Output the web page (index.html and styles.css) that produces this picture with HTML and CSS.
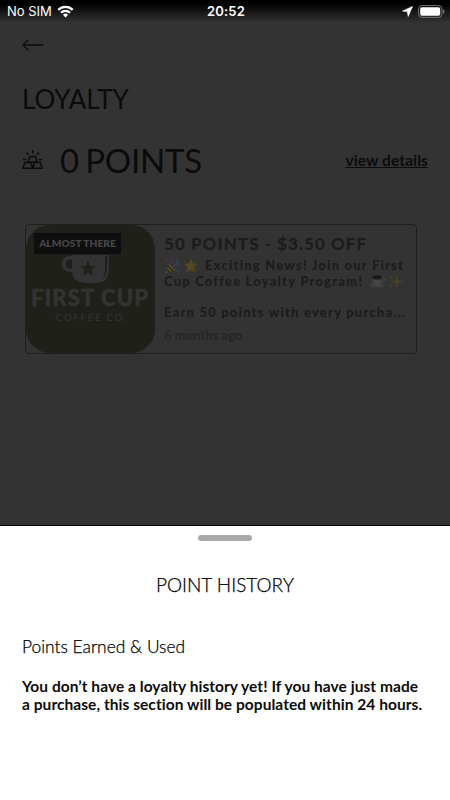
FILE: index.html
```html
<!DOCTYPE html>
<html lang="en">
<head>
    <meta charset="UTF-8">
    <meta name="viewport" content="width=device-width, initial-scale=1.0">
    <title>Loyalty</title>
    <link rel="stylesheet" href="styles.css">
</head>
<body>

    <div class="screen">
        <div class="status-bar">
            <div class="carrier">
                <span>No SIM</span>
                <svg width="17" height="13" viewBox="0 0 17 13">
                    <path d="M8.5 12.5 5.9 9.7a3.7 3.7 0 0 1 5.2 0z" fill="#fff"/>
                    <path d="M4 7.8a6.3 6.3 0 0 1 9 0M1.3 4.9a10 10 0 0 1 14.4 0" fill="none" stroke="#fff" stroke-width="2.3"/>
                </svg>
            </div>
            <div class="time">20:52</div>
            <div class="indicators">
                <svg width="11" height="11" viewBox="0 0 11 11">
                    <path d="M10.5.5 6.2 10.5 5.3 5.8.5 5z" fill="#fff" stroke="#fff" stroke-width=".6"/>
                </svg>
                <svg width="27" height="13" viewBox="0 0 27 13">
                    <rect x=".6" y=".6" width="23.3" height="11.8" rx="3.3" fill="none" stroke="#777" stroke-width="1"/>
                    <rect x="2.2" y="2.2" width="20" height="8.6" rx="1.8" fill="#fff"/>
                    <path d="M25 4.2q1.6.6 1.6 2.3T25 8.8z" fill="#777"/>
                </svg>
            </div>
        </div>

        <div class="page">
            <svg class="back" width="22" height="12" viewBox="0 0 22 12">
                <path d="M6.2.7 1 6l5.2 5.3M1 6h20.5" fill="none" stroke="#0b0b0b" stroke-width="1.3"/>
            </svg>
            <h1>LOYALTY</h1>

            <div class="points">
                <svg width="22" height="20" viewBox="0 0 22 20" fill="none" stroke="#0b0b0b" stroke-width="1.5">
                    <path d="M8 6.5h5.4l1.6 5.5H6.2zM2.8 12.5h6l2 5.8H.9zM12.4 12.5h6l1.8 5.8h-9.4zM10.7 0v3.3M4.5 2.6l1.9 2.1M16.900 2.6 15 4.7M1 9.5h3.2M17 9.5h3.2"/>
                </svg>
                <span class="total">0 POINTS</span>
                <a class="details">view details</a>
            </div>

            <div class="card">
                <div class="picture">
                    <span class="badge">ALMOST THERE</span>
                    <svg width="130" height="129" viewBox="0 0 130 129">
                        <path d="M46 30h37v14q0 14-14 14h-8q-14 0-15-11h-1c-12 0-12-16-1-16h2zM46 34.5h-2c-6 0-6 9 0 9h2z" fill="#333" fill-rule="evenodd"/>
                        <path d="M79 31v13q0 8-4 11 5-3 5.6-10l.9-14z" fill="#1f201a"/>
                        <path d="m62 35.5 2.2 5.4 5.8.4-4.5 3.7 1.5 5.6-5-3.1-5 3.1 1.5-5.6-4.5-3.7 5.8-.4z" fill="#1f201a"/>
                        <text class="logo-name" x="5" y="80.5" textLength="117">FIRST CUP</text>
                        <text class="logo-sub" x="29.5" y="95.5" textLength="71">COFFEE CO.</text>
                    </svg>
                </div>
                <div class="offer">
                    <h2>50 POINTS - $3.50 OFF</h2>
                    <p class="text line-emoji">
                        <svg class="emoji" width="17" height="16" viewBox="0 0 17 16">
                            <path d="M1 15.5 5 5.5l6.5 6.5z" fill="#54492a"/>
                            <path d="m2.5 11.5 3 2.5M4 8l5 5" stroke="#2b2422" stroke-width="1.3"/>
                            <path d="M7 6q3-2 1-5M10 9q2-4 6-3" fill="none" stroke="#4a3358" stroke-width="1.7"/>
                            <path d="m11 6 3-4M11 12h4" stroke="#264656" stroke-width="1.5"/>
                            <path d="M2 2h2M5 3h1M12 2h1M15 9h1M13 14h2" stroke="#5e3232" stroke-width="1.6"/>
                        </svg>
                        <svg class="emoji" width="17" height="16" viewBox="0 0 17 16">
                            <path d="m8 2 1.8 3.7 4 .6-2.9 3 .7 4.2L8 11.6l-3.7 1.9.7-4.2-2.9-3 4.1-.6z" fill="#524821" stroke="#524821" stroke-linejoin="round"/>
                            <path d="M8 0v2M1 3l2 1.5M15 3l-2 1.5M1 12l2-1M15 12l-2-1M8 13v3" stroke="#484023"/>
                        </svg>
                        <span>Exciting News! Join our First</span>
                    </p>
                    <p class="text line-emoji">
                        <span>Cup Coffee Loyalty Program!</span>
                        <svg class="emoji cup" width="17" height="14" viewBox="0 0 17 14">
                            <ellipse cx="8" cy="11.4" rx="7.8" ry="2.2" fill="#3d3e3e"/>
                            <path d="M3 3h10q0 9-5 9T3 3z" fill="#434443"/>
                            <ellipse cx="8" cy="3.4" rx="5" ry="2.2" fill="#1d1814"/>
                            <path d="M13 4q4-1 2 2.5L12 9" fill="none" stroke="#434443" stroke-width="1.2"/>
                        </svg>
                        <svg class="emoji" width="16" height="15" viewBox="0 0 16 15">
                            <path d="m9 1 1.6 5L15 7.5 10.6 9 9 14 7.4 9 3 7.5 7.4 6zM3 1l.7 2 2 .7-2 .7L3 6.5l-.7-2.1-2-.7 2-.7zM3 10l.7 1.5 1.5.5-1.5.5L3 14l-.7-1.5L.8 12l1.5-.5z" fill="#494123"/>
                        </svg>
                    </p>
                    <p class="text last">Earn 50 points with every purcha...</p>
                    <p class="age">6 months ago</p>
                </div>
            </div>
        </div>

        <div class="sheet">
            <div class="handle"></div>
            <h3>POINT HISTORY</h3>
            <h4>Points Earned &amp; Used</h4>
            <p>You don’t have a loyalty history yet! If you have just made<br>a purchase, this section will be populated within 24 hours.</p>
        </div>
    </div>

</body>
</html>
```
FILE: styles.css
```css
* {
    box-sizing: border-box;
}
body {
    margin: 0;
    font-family: Lato, sans-serif;
    font-variant-ligatures: none;
    color: #0b0b0b;
}
h1, h2, h3, h4, p {
    margin: 0;
    font-weight: 400;
    white-space: nowrap;
}
svg {
    display: block;
    flex: none;
}
.screen {
    display: flex;
    flex-direction: column;
    width: 450px;
    height: 800px;
    overflow: hidden;
    background-color: #333;
}
.status-bar {
    display: grid;
    grid-template-columns: 1fr auto 1fr;
    align-items: center;
    height: 24px;
    padding: 0 5px 2px 7px;
    background: linear-gradient(#000 15%, #333 95%);
    color: #fff;
    font-family: Inter, sans-serif;
    font-size: 13px;
}
.carrier {
    display: flex;
    align-items: center;
    gap: 5px;
}
.time {
    font-size: 13px;
    font-weight: 600;
    letter-spacing: 0.2px;
}
.indicators {
    display: flex;
    align-items: center;
    justify-content: flex-end;
    gap: 5px;
}
.page {
    height: 502px;
    padding: 15px 22px 0;
}
h1 {
    margin-top: 32px;
    font-size: 26px;
    line-height: 32px;
}
.points {
    display: flex;
    align-items: center;
    height: 40px;
    margin-top: 25px;
}
.total {
    margin-left: 16px;
    font-size: 33px;
    line-height: 40px;
    letter-spacing: -0.2px;
    word-spacing: -2px;
}
.details {
    margin-left: auto;
    font-size: 15.5px;
    font-weight: 700;
    letter-spacing: 0.1px;
    text-decoration: underline;
}
.card {
    display: flex;
    width: 392px;
    height: 130px;
    margin: 44px 0 0 3px;
    border: 1px solid #1f1f1f;
    border-radius: 4px;
}
.picture {
    position: relative;
    width: 129px;
    height: 128px;
    border-radius: 24px;
    background-color: #1f201a;
}
.badge {
    position: absolute;
    top: 8px;
    left: 8px;
    width: 87px;
    height: 21px;
    background-color: #0e0e0e;
    color: #444;
    font-size: 10.2px;
    font-weight: 800;
    line-height: 21px;
    text-align: center;
    white-space: nowrap;
}
.logo-name {
    fill: #333;
    stroke: #333;
    stroke-width: 0.5px;
    font-size: 22px;
    font-weight: 900;
}
.logo-sub {
    fill: #333;
    font-size: 10px;
}
.offer {
    padding: 8px 0 0 9px;
}
h2 {
    color: #1c1c1c;
    font-size: 17px;
    font-weight: 900;
    line-height: 22px;
    letter-spacing: 1.05px;
}
.text {
    height: 15.5px;
    color: #1c1c1c;
    font-size: 13px;
    font-weight: 900;
    line-height: 15.5px;
    letter-spacing: 1.2px;
}
h2 + .text {
    margin-top: 3px;
}
.line-emoji {
    display: flex;
    align-items: center;
}
.emoji + .emoji {
    margin-left: 2px;
}
.emoji + span {
    margin-left: 5px;
}
.cup {
    margin-left: 6px;
}
.last {
    margin-top: 16px;
}
.age {
    margin-top: 5px;
    color: #262626;
    font-size: 13px;
    font-weight: 700;
    line-height: 18px;
}
.sheet {
    flex: 1;
    padding: 8px 22px 0;
    border-top: 1px solid #000;
    margin-top: -1px;
    background-color: #fff;
}
.handle {
    width: 54px;
    height: 6px;
    margin: 1px auto 0;
    border-radius: 3px;
    background-color: #a9a9a9;
}
h3, h4 {
    color: #000;
    font-weight: 300;
    line-height: 24px;
    -webkit-text-stroke: 0.25px #000;
}
h3 {
    margin-top: 32px;
    font-size: 19px;
    text-align: center;
}
h4 {
    margin-top: 38px;
    font-size: 17.4px;
}
.sheet p {
    margin-top: 18px;
    font-size: 15.5px;
    font-weight: 700;
    line-height: 18px;
    letter-spacing: 0.05px;
}
```
